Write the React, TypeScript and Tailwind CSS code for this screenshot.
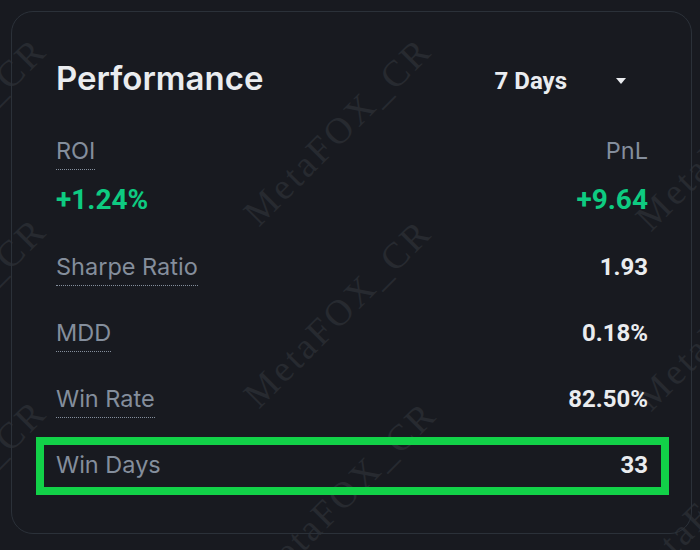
import React from 'react';

const stats = [
  { label: 'Sharpe Ratio', value: '1.93' },
  { label: 'MDD', value: '0.18%' },
  { label: 'Win Rate', value: '82.50%' },
];

// start points (bottom-left of the text) for the diagonal watermark tiles
const marks = [
  [-122, 232], [-122, 412], [-122, 594],
  [263, 232], [263, 414], [268, 596],
  [655, 237], [655, 417], [640, 600],
];

const label = "font-['Inter',sans-serif] text-[23.5px] leading-[24px] text-[#848e9c]";
const num = "font-['Roboto',sans-serif] font-bold text-[#eaecef]";

function Watermarks() {
  return (
    <div className="pointer-events-none absolute inset-0 overflow-hidden">
      {marks.map(([x, y], i) => (
        <span
          key={i}
          className="absolute origin-bottom-left -rotate-45 whitespace-nowrap font-['Liberation_Serif',serif] text-[37px] leading-[36px] tracking-[3px] text-[#272a30]"
          style={{ left: x, top: y - 36 }}
        >
          MetaFOX_CR
        </span>
      ))}
    </div>
  );
}

function Dotted({ children }: { children: React.ReactNode }) {
  return (
    <span className={`${label} inline-block border-b border-dotted border-[#848e9c] pb-[6px]`}>
      {children}
    </span>
  );
}

export default function App() {
  return (
    <div className="relative h-[550px] w-[700px] overflow-hidden bg-[#181a20]">
      <Watermarks />
      <div className="relative ml-[11px] mt-[11px] h-[523px] w-[681px] rounded-[22px] border border-[#2b3139] pl-[44px] pr-[43px] pt-[46px]">
        <div className="flex h-[40px] items-center justify-between">
          <h2 className="font-['Inter',sans-serif] text-[33px] font-semibold leading-[40px] text-[#eaecef]">
            Performance
          </h2>
          <button className="mr-[22px] mt-[6px] flex items-center gap-[49px]">
            <span className={`${num} text-[24px] leading-[28px]`}>7 Days</span>
            <svg width="10" height="6" viewBox="0 0 10 6">
              <path d="M0 0h10L5 6z" fill="#eaecef" />
            </svg>
          </button>
        </div>

        <div className="mt-[41px] flex justify-between">
          <Dotted>ROI</Dotted>
          <span className={label}>PnL</span>
        </div>
        <div className="mt-[14px] flex justify-between font-['Roboto',sans-serif] text-[28px] font-bold leading-[32px] text-[#0ecb81]">
          <span>+1.24%</span>
          <span>+9.64</span>
        </div>

        <div className="mt-[21px]">
          {stats.map((s) => (
            <div key={s.label} className="flex h-[66px] items-center justify-between">
              <Dotted>{s.label}</Dotted>
              <span className={`${num} mb-[6px] text-[24px] leading-[28px]`}>{s.value}</span>
            </div>
          ))}
          <div className="relative flex h-[66px] items-center justify-between">
            <div className="absolute -left-[20px] -right-[21px] top-[2px] h-[58px] border-[8px] border-[#12d148]" />
            <span className={`${label} pb-[7px]`}>Win Days</span>
            <span className={`${num} relative mb-[6px] text-[24px] leading-[28px]`}>33</span>
          </div>
        </div>
      </div>
    </div>
  );
}
